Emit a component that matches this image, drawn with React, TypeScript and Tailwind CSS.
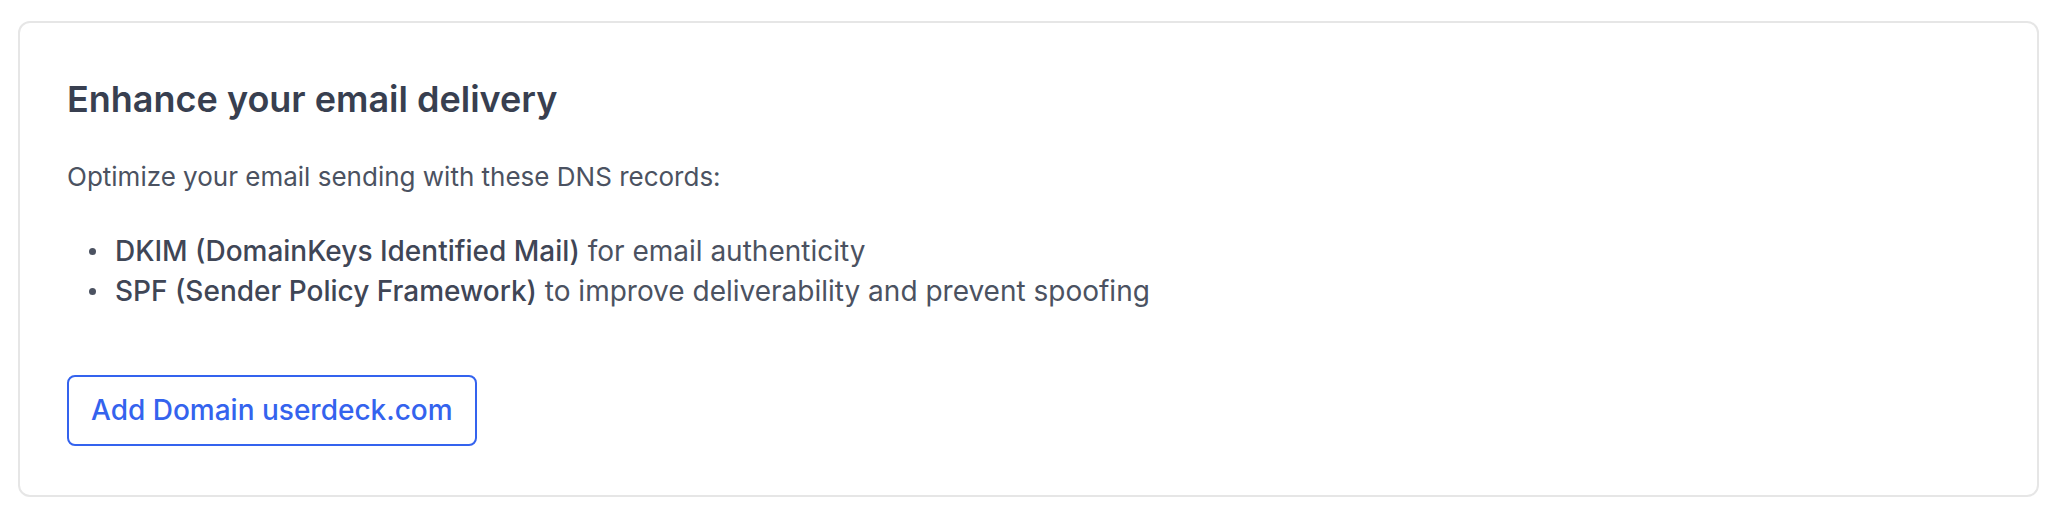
const items = [
  { strong: 'DKIM (DomainKeys Identified Mail)', rest: ' for email authenticity' },
  { strong: 'SPF (Sender Policy Framework)', rest: ' to improve deliverability and prevent spoofing' }
]

export default function App() {
  return (
    <div className="min-h-[518px] bg-white pl-[18px] pr-[23px] pt-[21px] font-['Inter',sans-serif]">
      <section className="rounded-[12px] border-2 border-[#e6e6e6] bg-white px-[47px] pt-[47px] pb-[49px]">
        <h2 className="text-[36px] leading-[58px] font-semibold text-[#383f50]">
          Enhance your email delivery
        </h2>

        <p className="mt-[31px] text-[26px] leading-[36px] text-[#4b5261]">
          Optimize your email sending with these DNS records:
        </p>

        <ul className="mt-[36px]">
          {items.map((it) => (
            <li key={it.strong} className="flex items-center text-[28px] leading-[40px] text-[#4b5261]">
              <span className="ml-[22px] mr-[19px] h-[7px] w-[7px] shrink-0 rounded-full bg-[#4b5261]" />
              <span>
                <span className="font-medium text-[#3f4656]">{it.strong}</span>
                {it.rest}
              </span>
            </li>
          ))}
        </ul>

        <button className="mt-[64px] rounded-[8px] border-2 border-[#3463ee] bg-white px-[22px] pt-[14px] pb-[15px] text-[28px] leading-[38px] font-medium text-[#3463ee]">
          Add Domain userdeck.com
        </button>
      </section>
    </div>
  )
}
